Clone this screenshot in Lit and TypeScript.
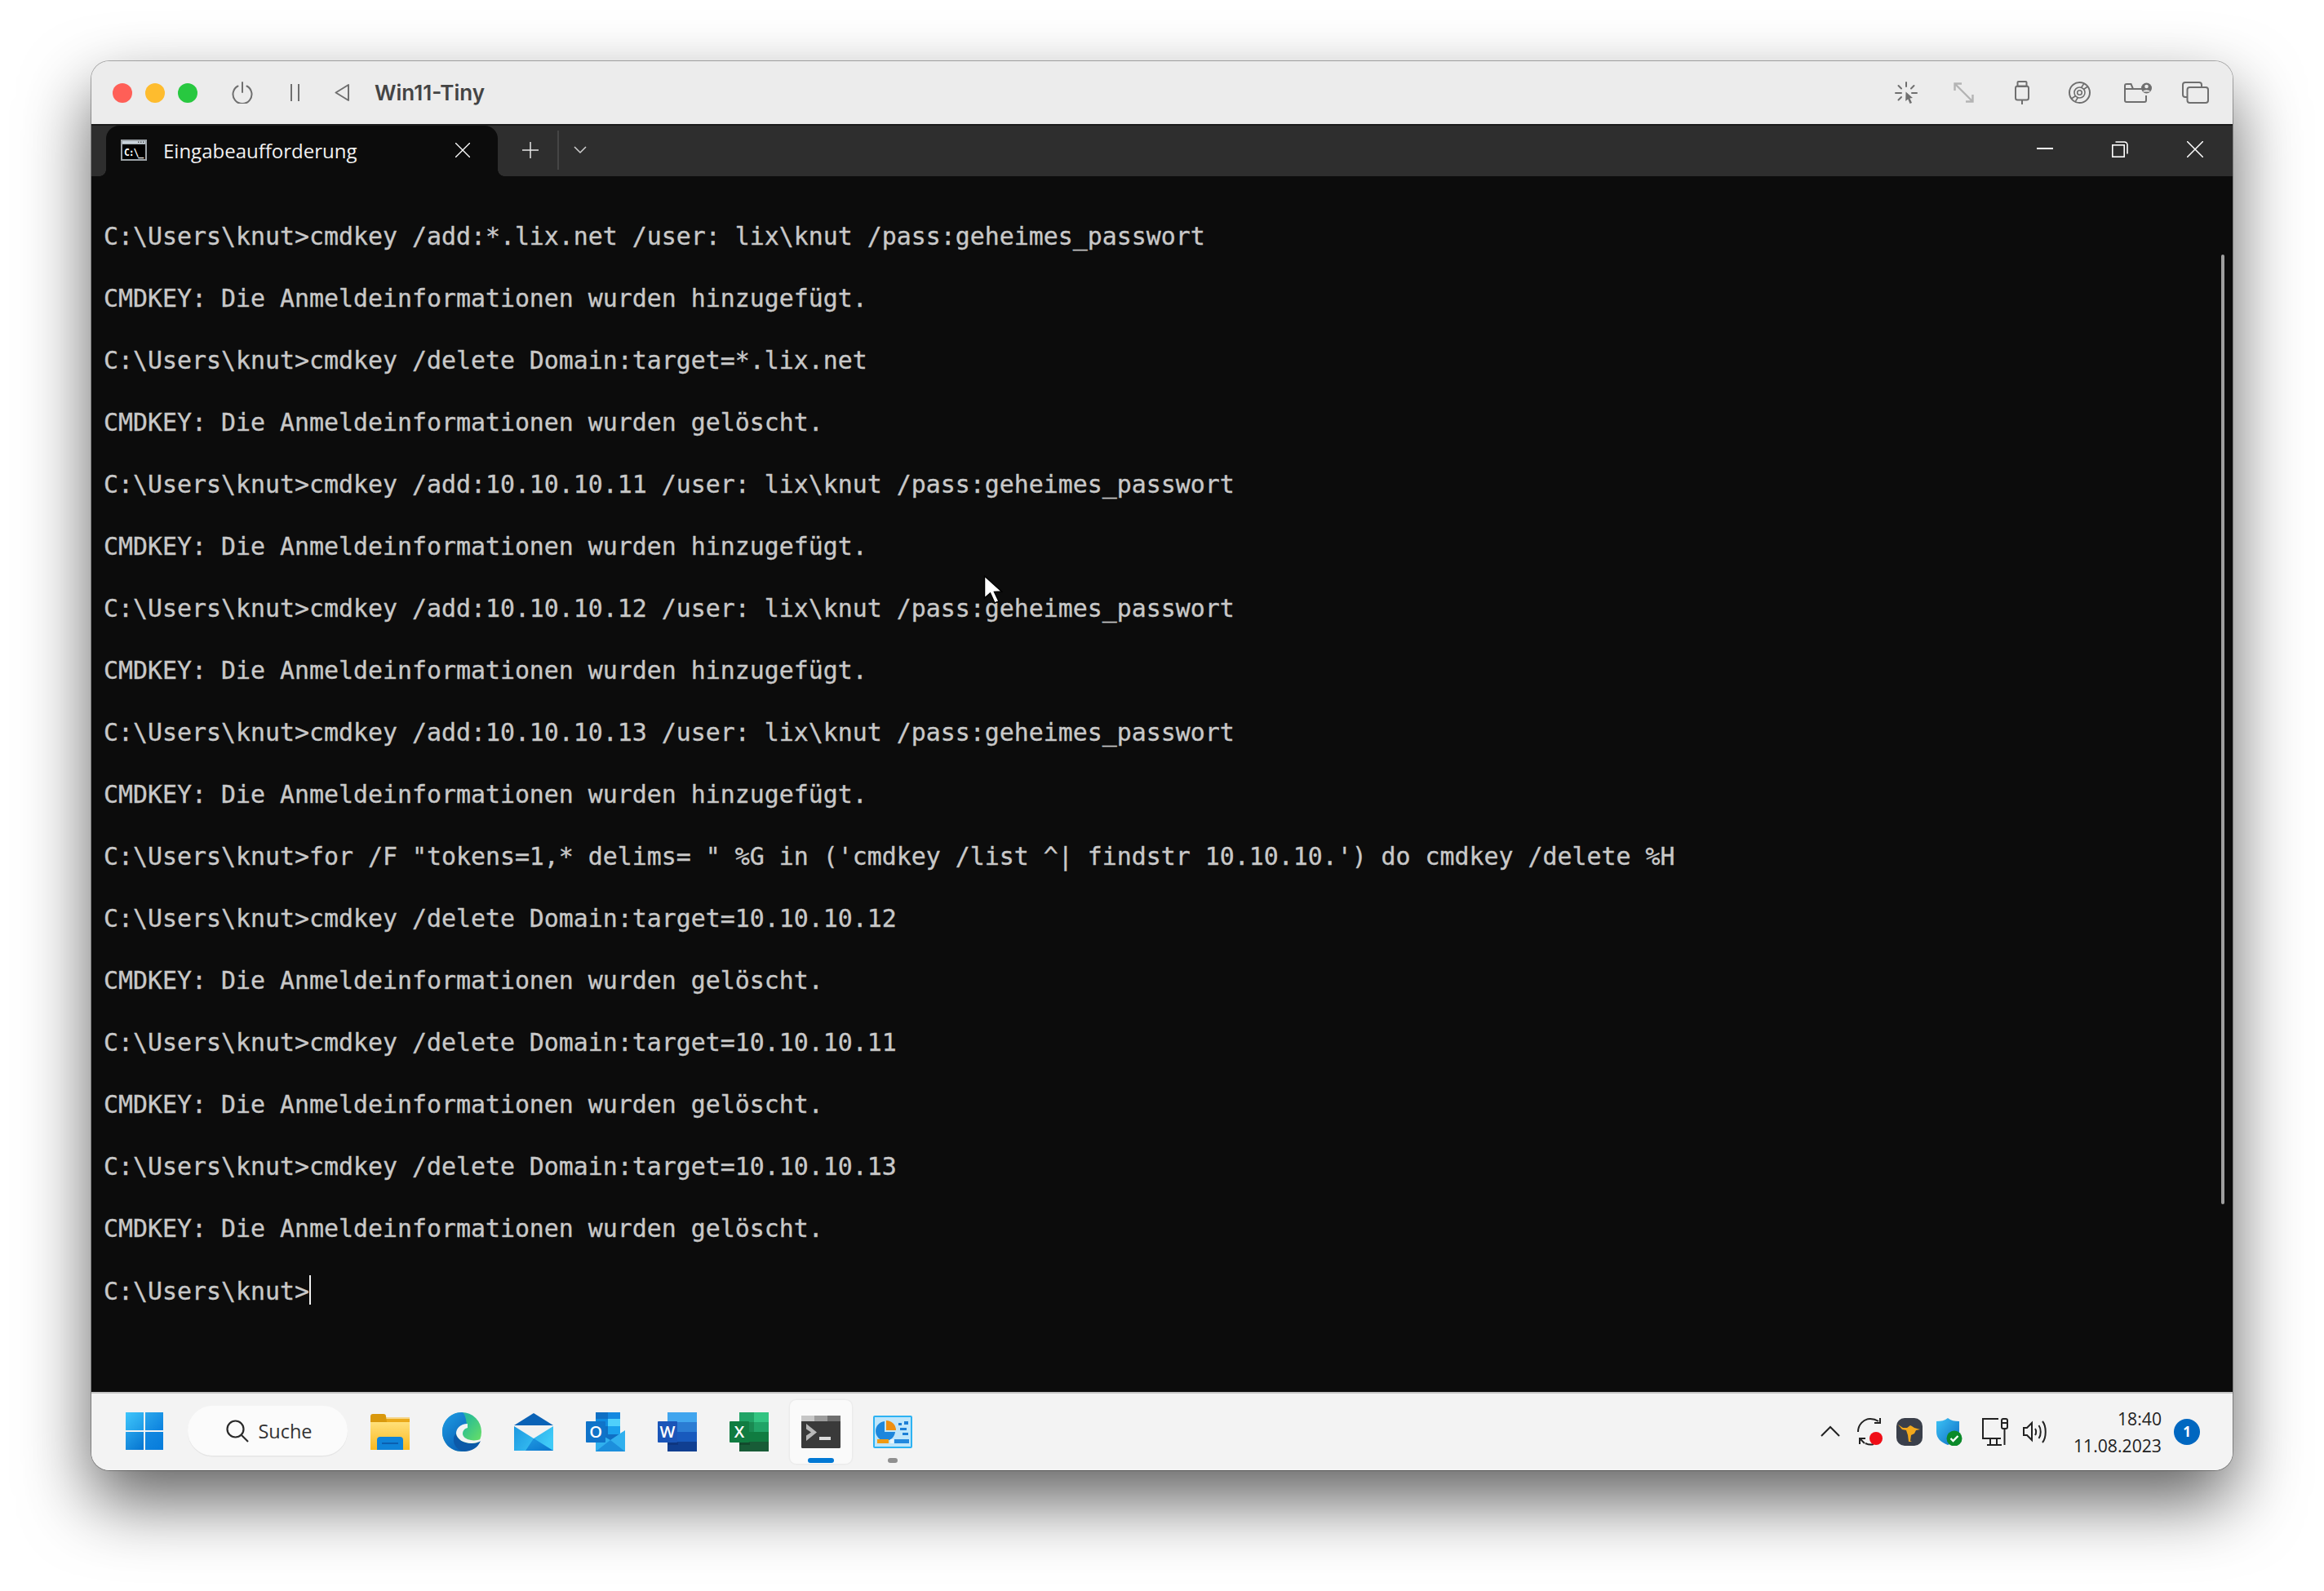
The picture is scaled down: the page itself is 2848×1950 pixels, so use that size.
import { LitElement, html, css, svg } from "lit";
import { customElement } from "lit/decorators.js";

const LINES = [
  "C:\\Users\\knut>cmdkey /add:*.lix.net /user: lix\\knut /pass:geheimes_passwort",
  "CMDKEY: Die Anmeldeinformationen wurden hinzugefügt.",
  "C:\\Users\\knut>cmdkey /delete Domain:target=*.lix.net",
  "CMDKEY: Die Anmeldeinformationen wurden gelöscht.",
  "C:\\Users\\knut>cmdkey /add:10.10.10.11 /user: lix\\knut /pass:geheimes_passwort",
  "CMDKEY: Die Anmeldeinformationen wurden hinzugefügt.",
  "C:\\Users\\knut>cmdkey /add:10.10.10.12 /user: lix\\knut /pass:geheimes_passwort",
  "CMDKEY: Die Anmeldeinformationen wurden hinzugefügt.",
  "C:\\Users\\knut>cmdkey /add:10.10.10.13 /user: lix\\knut /pass:geheimes_passwort",
  "CMDKEY: Die Anmeldeinformationen wurden hinzugefügt.",
  "C:\\Users\\knut>for /F \"tokens=1,* delims= \" %G in ('cmdkey /list ^| findstr 10.10.10.') do cmdkey /delete %H",
  "C:\\Users\\knut>cmdkey /delete Domain:target=10.10.10.12",
  "CMDKEY: Die Anmeldeinformationen wurden gelöscht.",
  "C:\\Users\\knut>cmdkey /delete Domain:target=10.10.10.11",
  "CMDKEY: Die Anmeldeinformationen wurden gelöscht.",
  "C:\\Users\\knut>cmdkey /delete Domain:target=10.10.10.13",
  "CMDKEY: Die Anmeldeinformationen wurden gelöscht.",
];

const grey = "#6f6f6f";

const powerIcon = html`<svg width="26" height="27" viewBox="0 0 26 27" fill="none" stroke="${grey}" stroke-width="2" stroke-linecap="round"><path d="M7.5 5.5A11.5 11.5 0 1 0 18.5 5.5"/><path d="M13 1v12"/></svg>`;
const pauseIcon = html`<svg width="11" height="21" viewBox="0 0 11 21" stroke="${grey}" stroke-width="2"><path d="M1 0v21M10 0v21"/></svg>`;
const backIcon = html`<svg width="18" height="21" viewBox="0 0 18 21" fill="none" stroke="${grey}" stroke-width="2" stroke-linejoin="round"><path d="M17 1v19L1.5 10.5z"/></svg>`;

const sparkIcon = html`<svg width="28" height="28" viewBox="0 0 28 28" fill="none" stroke="${grey}" stroke-width="2" stroke-linecap="round"><path d="M14 1v5M1 14h7M21 14h6M4.5 5l3.500 3.500M23.500 5L20 8.500M8 19l-3.500 3.500"/><path d="M13.500 12.500L22 20l-3.500.5 2.500 5.500-2.500 1-2.300-5.500-3 2.500z" fill="${grey}" stroke="none"/></svg>`;
const arrowsIcon = html`<svg width="25" height="25" viewBox="0 0 25 25" fill="none" stroke="#b4b4b4" stroke-width="2.400"><path d="M2 2l21 21M1.500 10V1.500H10M23.500 15v8.500H15"/></svg>`;
const usbIcon = html`<svg width="18" height="29" viewBox="0 0 18 29" fill="none" stroke="${grey}" stroke-width="2"><rect x="3.500" y="1" width="11" height="6" rx="1"/><rect x="1" y="6.500" width="16" height="17" rx="2.500"/><path d="M9 24v5"/></svg>`;
const cdIcon = html`<svg width="27" height="27" viewBox="0 0 27 27" fill="none" stroke="${grey}" stroke-width="1.600"><circle cx="13.500" cy="13.500" r="12.500" stroke-width="2"/><circle cx="13.500" cy="13.500" r="6.500"/><circle cx="13.500" cy="13.500" r="2.800"/><path d="M18.500 9.500l5-3.500M15.500 7.500l3-4.500M8.500 17.500l-5 3.500M11.500 19.500l-3 4.500"/></svg>`;
const folderIcon = html`<svg width="34" height="25" viewBox="0 0 34 25" fill="none" stroke="${grey}" stroke-width="2"><path d="M22 8H11L8.500 2H3a2 2 0 0 0-2 2v18a2 2 0 0 0 2 2h22a2 2 0 0 0 2-2v-6"/><path d="M1 8h10"/><circle cx="27.500" cy="7" r="6.500" fill="${grey}" stroke="none"/><circle cx="27.500" cy="5" r="2.300" fill="#ececec" stroke="none"/><path d="M23 11.500c1-3 8-3 9 0z" fill="#ececec" stroke="none"/></svg>`;
const windowsIcon = html`<svg width="33" height="27" viewBox="0 0 33 27" fill="none" stroke="${grey}" stroke-width="2"><path d="M6 19H4a3 3 0 0 1-3-3V4a3 3 0 0 1 3-3h17a3 3 0 0 1 3 3v2"/><rect x="6.500" y="7" width="25.500" height="19" rx="3"/></svg>`;

const cmdTabIcon = html`<svg width="32" height="26" viewBox="0 0 32 26"><rect width="32" height="26" fill="#9da3a8"/><rect x="2" y="6" width="28" height="18" fill="#000"/><rect x="2" y="2" width="28" height="3" fill="#c9d4dc"/><path d="M21 2.500h1.500V4H21zM24 2.500h1.500V4H24zM27 2.500h1.500V4H27z" fill="#555"/><text x="4" y="19.500" font-family="DejaVu Sans Mono" font-weight="700" font-size="11.500" letter-spacing="-1.200" fill="#fff">C:\\_</text></svg>`;

const closeIcon = (s: number) => html`<svg width="${s}" height="${s}" viewBox="0 0 20 20" stroke="#fff" stroke-width="1.500"><path d="M0 0l20 20M20 0L0 20"/></svg>`;
const tabPlus = html`<svg width="20" height="20" viewBox="0 0 20 20" stroke="#e8e8e8" stroke-width="1.500"><path d="M10 0v20M0 10h20"/></svg>`;
const tabChevron = html`<svg width="16" height="10" viewBox="0 0 16 10" fill="none" stroke="#d0d0d0" stroke-width="1.500"><path d="M1 1l7 7 7-7"/></svg>`;
const minIcon = html`<svg width="20" height="20" viewBox="0 0 20 20" stroke="#fff" stroke-width="1.800"><path d="M0 9h20"/></svg>`;
const restoreIcon = html`<svg width="20" height="20" viewBox="0 0 20 20" fill="none" stroke="#fff" stroke-width="1.600"><rect x=".8" y="4.800" width="14.400" height="14.400"/><path d="M4.500 1h11a3.500 3.500 0 0 1 3.500 3.500v11"/></svg>`;

const winLogo = html`<svg width="46" height="46" viewBox="0 0 46 46">
  <defs>
    <linearGradient id="w1" x1="0" y1="0" x2="1" y2="1"><stop offset="0" stop-color="#3fc5fb"/><stop offset="1" stop-color="#1d9ae6"/></linearGradient>
    <linearGradient id="w2" x1="0" y1="0" x2="1" y2="1"><stop offset="0" stop-color="#2ba7ec"/><stop offset="1" stop-color="#0a80de"/></linearGradient>
    <linearGradient id="w3" x1="0" y1="0" x2="1" y2="1"><stop offset="0" stop-color="#26a2ea"/><stop offset="1" stop-color="#0574d0"/></linearGradient>
    <linearGradient id="w4" x1="0" y1="0" x2="1" y2="1"><stop offset="0" stop-color="#148ae2"/><stop offset="1" stop-color="#067bda"/></linearGradient>
  </defs>
  <rect width="22" height="22" fill="url(#w1)"/><rect x="24" width="22" height="22" fill="url(#w2)"/>
  <rect y="24" width="22" height="22" fill="url(#w3)"/><rect x="24" y="24" width="22" height="22" fill="url(#w4)"/></svg>`;

const searchIcon = html`<svg width="28" height="28" viewBox="0 0 28 28" fill="none" stroke="#2a2a2a" stroke-width="2.200"><circle cx="11.500" cy="11.500" r="10"/><path d="M19 19l8 8"/></svg>`;

const fileIcon = html`<svg width="48" height="44" viewBox="0 0 48 44">
  <defs><linearGradient id="f1" x1="0" y1="0" x2="0" y2="1"><stop offset="0" stop-color="#ffe07a"/><stop offset="1" stop-color="#fbb91f"/></linearGradient></defs>
  <rect x="19" y="4" width="29" height="3" fill="#f7d78c"/>
  <path d="M19 6h29v5H19z" fill="#eaa91a"/>
  <path d="M0 3a3 3 0 0 1 3-3h13a3 3 0 0 1 3 3l1 7H0z" fill="#d9980c"/>
  <path d="M0 10h48v34H0z" fill="url(#f1)"/>
  <path d="M8 44v-12a4 4 0 0 1 4-4h24a4 4 0 0 1 4 4v12z" fill="#0f83d8"/><path d="M14 35h20v2H14z" fill="#0a5fb0"/></svg>`;

const edgeIcon = html`<svg width="48" height="48" viewBox="0 0 48 48">
  <defs>
    <linearGradient id="e1" x1="0" y1="0" x2="1" y2=".8"><stop offset="0" stop-color="#1a9fd8"/><stop offset=".5" stop-color="#2fc08f"/><stop offset="1" stop-color="#6ee262"/></linearGradient>
    <linearGradient id="e2" x1="0" y1="0" x2=".6" y2="1"><stop offset="0" stop-color="#1f9fe6"/><stop offset="1" stop-color="#0b63b8"/></linearGradient>
  </defs>
  <circle cx="24" cy="24" r="24" fill="url(#e1)"/>
  <path d="M24 0C10 0 0 11 0 24c0 13 10 24 24 24 6 0 4-4 0-8-6-6-9-11-6-17 2-5 7-8 12-8-1-8-3-15-6-15z" fill="url(#e2)"/>
  <path d="M17 26c1 7 9 12 19 12 4 0 8-1 11-3-3 8-11 13-20 13-8-1-14-8-13-16 0-2 1-4 3-6z" fill="#0c59a8"/>
  <path d="M31 14c-9 0-14 6-14 12 1 7 9 12 19 12 4 0 8-1 11-3l0-2c-3 1-8 2-12 1-6-1-10-4-10-8 0-3 2-6 6-7z" fill="#f3f3f3"/>
</svg>`;

const mailIcon = html`<svg width="48" height="46" viewBox="0 0 48 46">
  <defs>
    <linearGradient id="m1" x1="0" y1="0" x2="1" y2=".4"><stop offset="0" stop-color="#1c98e0"/><stop offset="1" stop-color="#3fcaf7"/></linearGradient>
    <linearGradient id="m2" x1="0" y1="0" x2="1" y2="1"><stop offset="0" stop-color="#1f9ae2"/><stop offset="1" stop-color="#0a74cc"/></linearGradient>
  </defs>
  <path d="M24 0l24 15H0z" fill="#0a62b6"/>
  <path d="M0 15h48L24 31z" fill="#f2f2f2"/>
  <path d="M0 16l24 15 24-15v30H0z" fill="url(#m1)"/>
  <path d="M24 31l24 15H14z" fill="url(#m2)"/></svg>`;

const letter = (c: string) => svg`<text x="12" y="31" text-anchor="middle" font-family="Open Sans" font-weight="600" font-size="20" fill="#fff">${c}</text>`;

const outlookIcon = html`<svg width="48" height="48" viewBox="0 0 48 48">
  <rect x="12" y="0" width="30" height="36" fill="#0f6fc4"/>
  <rect x="27" y="8" width="15" height="9" fill="#4fd0fb"/><rect x="12" y="8" width="15" height="9" fill="#0f8ae0"/>
  <rect x="27" y="0" width="15" height="8" fill="#1488e0"/><rect x="27" y="17" width="15" height="10" fill="#1aa0ec"/>
  <path d="M12 24l18 10 18-12v26H12z" fill="#30b0ee"/><path d="M12 48l18-14 18 14z" fill="#1c8fdc"/>
  <rect x="0" y="11" width="24" height="26" rx="1" fill="#0f73c9"/>
  ${letter("O")}</svg>`;

const wordIcon = html`<svg width="48" height="48" viewBox="0 0 48 48">
  <rect x="12" y="0" width="36" height="12" fill="#41a5ee"/><rect x="12" y="12" width="36" height="12" fill="#2b7cd3"/><rect x="12" y="24" width="36" height="12" fill="#185abd"/><rect x="12" y="36" width="36" height="12" fill="#103f91"/>
  <rect x="12" y="37" width="13" height="3" fill="#0e3680"/>
  <rect x="0" y="11" width="24" height="26" rx="1" fill="#1a55b8"/>
  ${letter("W")}</svg>`;

const excelIcon = html`<svg width="48" height="48" viewBox="0 0 48 48">
  <rect x="12" y="0" width="18" height="12" fill="#21a366"/><rect x="30" y="0" width="18" height="12" fill="#33c481"/>
  <rect x="12" y="12" width="18" height="12" fill="#1a8a52"/><rect x="30" y="12" width="18" height="12" fill="#21a366"/>
  <rect x="12" y="24" width="18" height="12" fill="#107c41"/><rect x="30" y="24" width="18" height="12" fill="#107c41"/>
  <rect x="12" y="36" width="36" height="12" fill="#185c37"/>
  <rect x="12" y="37" width="13" height="3" fill="#124a2c"/>
  <rect x="0" y="11" width="24" height="26" rx="1" fill="#107c41"/>
  ${letter("X")}</svg>`;

const terminalIcon = html`<svg width="48" height="40" viewBox="0 0 48 40">
  <rect width="48" height="40" rx="1.500" fill="#3a3a3a"/>
  <rect width="16" height="7" fill="#c6c6c6"/><rect x="16" width="16" height="7" fill="#9c9c9c"/><rect x="32" width="16" height="7" fill="#6e6e6e"/>
  <path d="M6 10l13 10.500L6 31v-6.500l6-4-6-4z" fill="#b8b8b8"/><rect x="22" y="26" width="14" height="4" fill="#dcdcdc"/></svg>`;

const panelIcon = html`<svg width="48" height="40" viewBox="0 0 48 40">
  <rect x="1" y="1" width="46" height="38" rx="1" fill="#bfe6fb" stroke="#2db2f2" stroke-width="2"/>
  <path d="M16 6v12h12A12 12 0 0 0 16 6z" fill="#ee8f10"/><path d="M14 7a12 12 0 1 0 13 13H14z" fill="#1c86dc"/>
  <path d="M31 9h4v3h-4zM38 7h5v4h-5zM33 15h8v3h-8zM36 21h7v3h-7z" fill="#1c7ed6"/>
  <rect x="5" y="29" width="14" height="5" fill="#f09a12"/><rect x="21" y="29" width="4" height="5" fill="#e8f4fb"/><rect x="26" y="29" width="18" height="5" fill="#2388de"/></svg>`;

const trayChevron = html`<svg width="24" height="14" viewBox="0 0 24 14" fill="none" stroke="#222" stroke-width="2"><path d="M1 13L12 2l11 11"/></svg>`;
const syncIcon = html`<svg width="32" height="34" viewBox="0 0 32 34" fill="none" stroke="#222" stroke-width="2"><path d="M1 17C1 8 8 1 16 1c4 0 7 1 10 3"/><path d="M28 0v6h-7"/><path d="M20 32c-3 1-6 1-10-1"/><path d="M3 32v-7h7M3 25l6 6"/><circle cx="23" cy="25" r="8" fill="#f00d16" stroke="none"/></svg>`;
const kangaIcon = html`<svg width="32" height="34" viewBox="0 0 32 34"><rect width="32" height="34" rx="10" fill="#3a3f4a"/><path d="M2 8l6 4h5l4-3 2 1 3 2 7 2-5 1-2 4-4 2-1 7 2 1h-4l-1-8-2-6-5-1z" fill="#f2a81c"/></svg>`;
const shieldIcon = html`<svg width="32" height="34" viewBox="0 0 32 34">
  <defs><linearGradient id="s1" x1="0" y1="0" x2="1" y2="1"><stop offset="0" stop-color="#3cc4f6"/><stop offset="1" stop-color="#0f6cc4"/></linearGradient></defs>
  <path d="M14 0c4 3 8 4 14 4v13c0 8-6 13-14 16C6 30 0 25 0 17V4c6 0 10-1 14-4z" fill="url(#s1)"/>
  <circle cx="22" cy="25" r="9.500" fill="#0b8a2a"/><path d="M17.500 25l3 3 6-6" fill="none" stroke="#fff" stroke-width="2.400"/></svg>`;
const netIcon = html`<svg width="32" height="34" viewBox="0 0 32 34" fill="none" stroke="#222" stroke-width="2"><path d="M20 1H1v24h22M10 25v7M18 25v7M6 33h18"/><rect x="24" y="1" width="7" height="12" rx="2"/><path d="M24 6h7M27.500 13v20"/></svg>`;
const speakerIcon = html`<svg width="32" height="28" viewBox="0 0 32 28" fill="none" stroke="#222" stroke-width="2"><path d="M1 9v9h4l6 6V3L5 9z"/><path d="M15 10c1.500 2 1.500 6 0 8"/><path d="M19.500 6c3 4 3 12 0 16"/><path d="M24 1c5 6 5 20 0 26"/></svg>`;

const cursorIcon = html`<svg width="24" height="36" viewBox="0 0 24 36"><path d="M1.500 1v27l7-6 5.500 12 5-2-5.500-11.500 9-.5z" fill="#fff" stroke="#000" stroke-width="1.500"/></svg>`;

@customElement("app-root")
export class AppRoot extends LitElement {
  static styles = css`
    :host { display: block; width: 2848px; height: 1950px; background: #fff; overflow: hidden; }
    .page { padding: 75px 112px 0; width: 2848px; height: 1950px; box-sizing: border-box; }
    .window { position: relative; height: 1727px; display: flex; flex-direction: column; border-radius: 22px; overflow: hidden; }
    .shadow { border-radius: 22px; box-shadow: 0 38px 84px rgba(0,0,0,.62), 0 0 0 1px rgba(0,0,0,.3); }
    .titlebar { height: 77px; flex: none; display: flex; align-items: center; background: #ececec; padding: 0 10px 0 26px; box-sizing: border-box; }
    .lights { display: flex; gap: 16px; margin-right: 42px; }
    .light { width: 24px; height: 24px; border-radius: 50%; }
    .red { background: #ff5f57; } .yellow { background: #febc2e; } .green { background: #28c840; }
    .ctl { display: flex; align-items: center; }
    .pause { margin-left: 46px; } .back { margin-left: 43px; }
    .vmname { margin-left: 31px; font: 600 26px Inter, "Liberation Sans", sans-serif; color: #444; }
    .tools { margin-left: auto; display: flex; }
    .tool { width: 71px; display: flex; justify-content: center; align-items: center; }
    .strip { height: 64px; flex: none; box-sizing: border-box; border-top: 2px solid #1b1b1b; background: #2e2e2e; display: flex; align-items: stretch; color: #fff; }
    .tab { position: relative; margin-left: 18px; width: 480px; background: #0c0c0c; border-radius: 16px 16px 0 0; display: flex; align-items: center; padding: 0 34px 2px 18px; box-sizing: border-box; }
    .tab::before, .tab::after { content: ""; position: absolute; bottom: 0; width: 8px; height: 8px; }
    .tab::before { left: -8px; background: radial-gradient(circle at 0 0, #2e2e2e 7.500px, #0c0c0c 8px); }
    .tab::after { right: -8px; background: radial-gradient(circle at 100% 0, #2e2e2e 7.500px, #0c0c0c 8px); }
    .tab-label { margin-left: 20px; font: 400 24px "Open Sans", sans-serif; flex: 1; color: #f2f2f2; }
    .tab-x { display: flex; }
    .newtab { width: 80px; display: flex; align-items: center; justify-content: center; padding-bottom: 3px; }
    .divider { width: 2px; margin: 6px 0 8px -7px; background: #454545; }
    .dropdown { width: 52px; display: flex; align-items: center; justify-content: center; padding-bottom: 3px; }
    .winctl { margin-left: auto; display: flex; }
    .winbtn { width: 92px; display: flex; align-items: center; justify-content: center; padding-bottom: 4px; }
    .terminal { flex: 1; min-height: 0; position: relative; background: #0c0c0c; padding: 55px 0 0 15px; box-sizing: border-box; font: 400 29.900px/38px "DejaVu Sans Mono", monospace; color: #c8c8c8; -webkit-text-stroke: 0.35px #c8c8c8; }
    .rows { display: flex; flex-direction: column; gap: 38px; }
    .row { white-space: pre; height: 38px; }
    .caret { display: inline-block; width: 2px; height: 36px; background: #f0f0f0; vertical-align: -6px; }
    .scrollbar { position: absolute; right: 10px; top: 96px; width: 4px; height: 1164px; border-radius: 2px; background: #9e9e9e; }
    .mouse { position: absolute; left: 1093px; top: 489px; line-height: 0; }
    .taskbar { height: 96px; flex: none; box-sizing: border-box; border-top: 2px solid #c4c4c4; background: #f3f3f3; display: flex; align-items: center; padding: 0 40px 0 42px; }
    .start { display: flex; margin-top: -2px; }
    .search { margin-left: 30px; width: 196px; height: 61px; border-radius: 31px; background: #fbfbfb; box-shadow: 0 1.500px 0 #e6e6e6; display: flex; align-items: center; justify-content: center; gap: 11px; margin-top: -3px; padding-left: 4px; box-sizing: border-box; }
    .search span { font: 400 23.500px "Open Sans", sans-serif; color: #333; }
    .search svg { display: block; }
    .apps { margin-left: 14px; display: flex; gap: 12px; }
    .app { width: 76px; height: 78px; position: relative; display: flex; align-items: center; justify-content: center; box-sizing: border-box; border-radius: 8px; }
    .app.active { background: #fafafa; box-shadow: 0 0 0 1.500px #ececec; }
    .pip { position: absolute; bottom: 1px; left: 50%; height: 6px; border-radius: 3px; transform: translateX(-50%); }
    .pip.on { width: 32px; background: #0078d4; }
    .pip.off { width: 12px; background: #8f8f8f; }
    .tray { margin-left: auto; display: flex; align-items: center; }
    .tray-i { width: 50px; display: flex; justify-content: center; }
    .tray-chev { margin-right: 5px; width: 38px; display: flex; justify-content: center; margin-top: -2px; }
    .tray-i.kg { margin-left: -2px; }
    .tray-i.sh { margin-left: -1px; }
    .tray-i.net { width: 56px; padding-left: 6px; box-sizing: border-box; }
    .tray-i.spk { width: 50px; padding-left: 2px; box-sizing: border-box; margin-left: -1px; }
    .clock { margin-left: 22px; text-align: right; font: 400 21.200px/33px "Open Sans", sans-serif; color: #222; }
    .badge { margin-left: 15px; width: 32px; height: 32px; border-radius: 50%; background: #0067c0; color: #fff; font: 700 17px/32px "Open Sans", sans-serif; text-align: center; }
  `;

  render() {
    return html`<div class="page"><div class="shadow"><div class="window">
      <div class="titlebar">
        <div class="lights"><div class="light red"></div><div class="light yellow"></div><div class="light green"></div></div>
        <div class="ctl">${powerIcon}</div>
        <div class="ctl pause">${pauseIcon}</div>
        <div class="ctl back">${backIcon}</div>
        <div class="vmname">Win11-Tiny</div>
        <div class="tools">
          <div class="tool">${sparkIcon}</div><div class="tool">${arrowsIcon}</div><div class="tool">${usbIcon}</div>
          <div class="tool">${cdIcon}</div><div class="tool">${folderIcon}</div><div class="tool">${windowsIcon}</div>
        </div>
      </div>
      <div class="strip">
        <div class="tab">${cmdTabIcon}<div class="tab-label">Eingabeaufforderung</div><div class="tab-x">${closeIcon(18)}</div></div>
        <div class="newtab">${tabPlus}</div><div class="divider"></div><div class="dropdown">${tabChevron}</div>
        <div class="winctl"><div class="winbtn">${minIcon}</div><div class="winbtn">${restoreIcon}</div><div class="winbtn">${closeIcon(20)}</div></div>
      </div>
      <div class="terminal">
        <div class="rows">
          ${LINES.map((l) => html`<div class="row">${l}</div>`)}
          <div class="row">C:\\Users\\knut&gt;<span class="caret"></span></div>
        </div>
        <div class="scrollbar"></div>
        <div class="mouse">${cursorIcon}</div>
      </div>
      <div class="taskbar">
        <div class="start">${winLogo}</div>
        <div class="search">${searchIcon}<span>Suche</span></div>
        <div class="apps">
          <div class="app">${fileIcon}</div><div class="app">${edgeIcon}</div><div class="app">${mailIcon}</div>
          <div class="app">${outlookIcon}</div><div class="app">${wordIcon}</div><div class="app">${excelIcon}</div>
          <div class="app active">${terminalIcon}<div class="pip on"></div></div>
          <div class="app">${panelIcon}<div class="pip off"></div></div>
        </div>
        <div class="tray">
          <div class="tray-chev">${trayChevron}</div>
          <div class="tray-i">${syncIcon}</div><div class="tray-i kg">${kangaIcon}</div><div class="tray-i sh">${shieldIcon}</div>
          <div class="tray-i net">${netIcon}</div><div class="tray-i spk">${speakerIcon}</div>
          <div class="clock">18:40<br />11.08.2023</div>
          <div class="badge">1</div>
        </div>
      </div>
    </div></div></div>`;
  }
}
